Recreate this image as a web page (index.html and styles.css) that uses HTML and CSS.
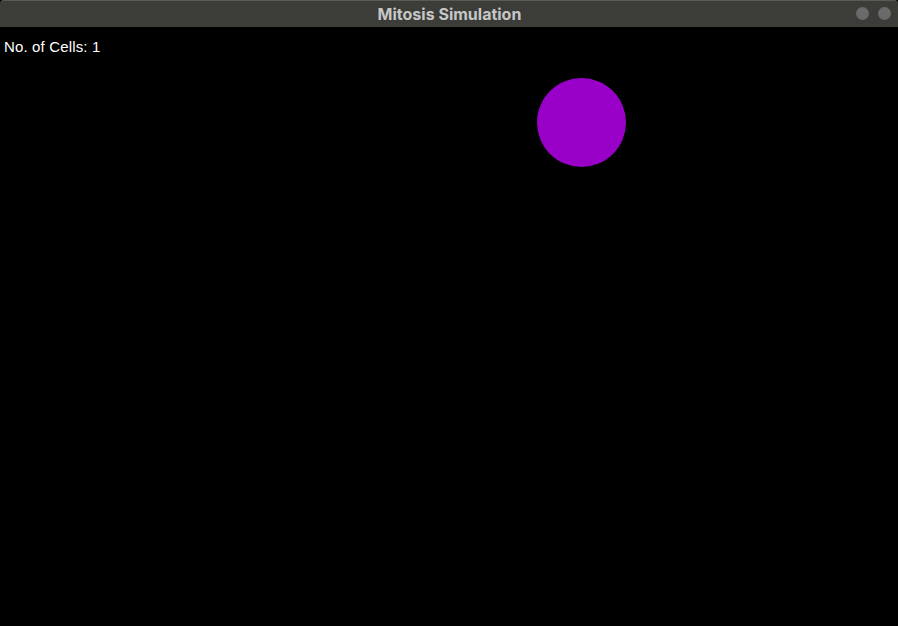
FILE: index.html
```html
<!DOCTYPE html>
<html>
<head>
<meta charset="utf-8">
<link rel="stylesheet" href="styles.css">
<title>Mitosis Simulation</title>
</head>
<body>
<div class="window">
  <header class="titlebar">
    <span class="title">Mitosis Simulation</span>
    <div class="controls">
      <span class="btn"></span>
      <span class="btn"></span>
    </div>
  </header>
  <main class="canvas">
    <div class="count">No. of Cells: 1</div>
    <div class="cell" style="left:537px; top:51px; width:89px; height:89px;"></div>
  </main>
</div>
</body>
</html>
```
FILE: styles.css
```css
html, body {
  margin: 0;
  padding: 0;
  background: #000;
  width: 898px;
  height: 626px;
  overflow: hidden;
}
.window {
  display: flex;
  flex-direction: column;
  width: 898px;
  height: 626px;
  background: #000;
}
.titlebar {
  position: relative;
  height: 27px;
  flex: 0 0 27px;
  box-sizing: border-box;
  background: #3c3c38;
  border-top: 1px solid #5a5a56;
  border-radius: 4px 4px 0 0;
  display: flex;
  align-items: center;
  justify-content: center;
}
.title {
  font-family: Inter, "Liberation Sans", sans-serif;
  font-weight: 700;
  font-size: 16px;
  color: #c6c6c6;
  letter-spacing: 0;
  padding-left: 1px;
}
.controls {
  position: absolute;
  right: 7px;
  top: 6px;
  display: flex;
  gap: 9px;
}
.btn {
  width: 13px;
  height: 13px;
  border-radius: 50%;
  background: #6a6a6a;
}
.canvas {
  position: relative;
  flex: 1;
  background: #000;
}
.count {
  font-family: "Liberation Sans", Arial, sans-serif;
  font-size: 15px;
  color: #fff;
  padding: 11px 0 0 4px;
  line-height: 17px;
  letter-spacing: 0.15px;
}
.cell {
  position: absolute;
  border-radius: 50%;
  background: #9900c8;
}
```
